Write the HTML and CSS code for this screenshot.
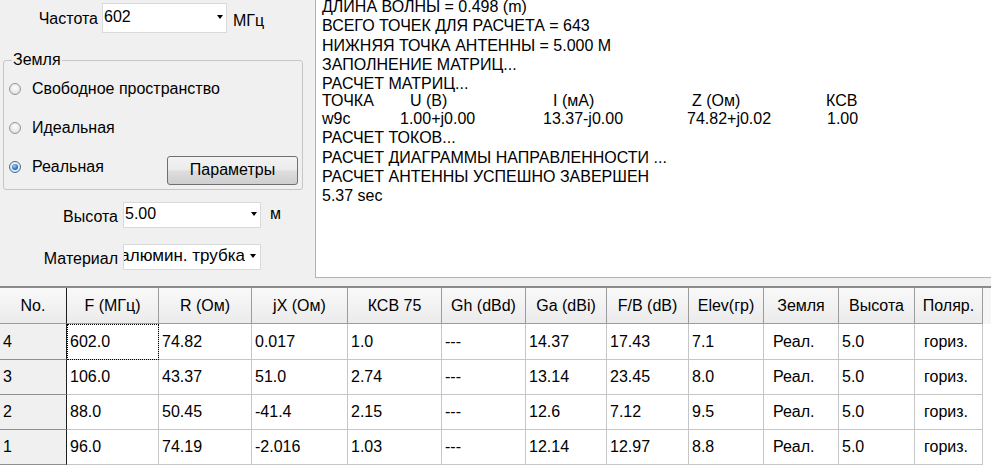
FILE: index.html
```html
<!DOCTYPE html>
<html lang="ru">
<head>
<meta charset="utf-8">
<title>Расчет антенны</title>
<link rel="stylesheet" href="styles.css">
</head>
<body>
<div class="top">
  <div class="left">
    <div class="row-freq">
      <span class="lbl lbl-freq">Частота</span>
      <div class="combo combo-freq"><span class="combo-text">602</span><span class="arrow"></span></div>
      <span class="unit unit-freq">МГц</span>
    </div>
    <fieldset class="ground">
      <legend>Земля</legend>
      <div class="radio-row"><span class="radio"></span><span>Свободное пространство</span></div>
      <div class="radio-row"><span class="radio"></span><span>Идеальная</span></div>
      <div class="radio-row"><span class="radio on"><span class="dot"></span></span><span>Реальная</span><button class="btn">Параметры</button></div>
    </fieldset>
    <div class="row-std row-height">
      <span class="lbl lbl-std">Высота</span>
      <div class="combo combo-std"><span class="combo-text">5.00</span><span class="arrow"></span></div>
      <span class="unit unit-m">м</span>
    </div>
    <div class="row-std row-mat">
      <span class="lbl lbl-std">Материал</span>
      <div class="combo combo-std"><span class="combo-text clip"><span>алюмин. трубка</span></span><span class="arrow arrow-mat"></span></div>
    </div>
  </div>
  <div class="log">
    <div class="log-text">
      <div class="ln">ДЛИНА ВОЛНЫ = 0.498 (m)</div>
      <div class="ln">ВСЕГО ТОЧЕК ДЛЯ РАСЧЕТА = 643</div>
      <div class="ln">НИЖНЯЯ ТОЧКА АНТЕННЫ = 5.000 М</div>
      <div class="ln">ЗАПОЛНЕНИЕ МАТРИЦ...</div>
      <div class="ln">РАСЧЕТ МАТРИЦ...</div>
      <div class="tabrow thead"><span>ТОЧКА</span><span class="c2">U (В)</span><span class="c3">I (мА)</span><span class="c4">Z (Ом)</span><span>КСВ</span></div>
      <div class="tabrow tval"><span>w9c</span><span>1.00+j0.00</span><span>13.37-j0.00</span><span>74.82+j0.02</span><span class="c5">1.00</span></div>
      <div class="ln">РАСЧЕТ ТОКОВ...</div>
      <div class="ln">РАСЧЕТ ДИАГРАММЫ НАПРАВЛЕННОСТИ ...</div>
      <div class="ln">РАСЧЕТ АНТЕННЫ УСПЕШНО ЗАВЕРШЕН</div>
      <div class="ln">5.37 sec</div>
    </div>
  </div>
</div>
<div class="grid-wrap">
  <table class="grid">
    <colgroup>
      <col class="w1"><col class="w2"><col class="w3"><col class="w4"><col class="w5"><col class="w6"><col class="w7"><col class="w8"><col class="w9"><col class="w10"><col class="w11"><col class="w12"><col class="wf">
    </colgroup>
    <thead>
      <tr class="hrow">
        <th class="hno">No.</th><th>F (МГц)</th><th>R (Ом)</th><th>jX (Ом)</th><th>КСВ 75</th><th>Gh (dBd)</th><th>Ga (dBi)</th><th>F/B (dB)</th><th>Elev(гр)</th><th>Земля</th><th>Высота</th><th>Поляр.</th><th class="hfill"></th>
      </tr>
    </thead>
    <tbody>
      <tr class="r1">
        <td class="rh">4</td><td class="focus">602.0</td><td>74.82</td><td>0.017</td><td>1.0</td><td>---</td><td>14.37</td><td>17.43</td><td>7.1</td><td class="ind">Реал.</td><td>5.0</td><td class="ind">гориз.</td><td class="fill"></td>
      </tr>
      <tr>
        <td class="rh">3</td><td>106.0</td><td>43.37</td><td>51.0</td><td>2.74</td><td>---</td><td>13.14</td><td>23.45</td><td>8.0</td><td class="ind">Реал.</td><td>5.0</td><td class="ind">гориз.</td><td class="fill"></td>
      </tr>
      <tr>
        <td class="rh">2</td><td>88.0</td><td>50.45</td><td>-41.4</td><td>2.15</td><td>---</td><td>12.6</td><td>7.12</td><td>9.5</td><td class="ind">Реал.</td><td>5.0</td><td class="ind">гориз.</td><td class="fill"></td>
      </tr>
      <tr>
        <td class="rh">1</td><td>96.0</td><td>74.19</td><td>-2.016</td><td>1.03</td><td>---</td><td>12.14</td><td>12.97</td><td>8.8</td><td class="ind">Реал.</td><td>5.0</td><td class="ind">гориз.</td><td class="fill"></td>
      </tr>
    </tbody>
  </table>
</div>
</body>
</html>
```
FILE: styles.css
```css
* { box-sizing: border-box; }
html, body { margin: 0; padding: 0; }
body {
  width: 991px;
  height: 467px;
  overflow: hidden;
  background: #f0f0f0;
  color: #000;
  font-family: "Liberation Sans", Arial, sans-serif;
  font-size: 16px;
}

/* ---------- top area ---------- */
.top { display: flex; height: 278px; }
.left { width: 315px; flex: none; }

.row-freq {
  display: flex;
  align-items: center;
  height: 30px;
  margin-top: 3px;
}
.lbl { text-align: right; white-space: nowrap; }
.lbl-freq { width: 98px; margin-right: 4px; padding-top: 2px; }
.lbl-std { width: 118px; margin-right: 5px; padding-top: 3px; }

.combo {
  display: flex;
  align-items: center;
  background: #fff;
  border: 1px solid #dadada;
}
.combo-freq { width: 125px; height: 30px; }
.combo-std { width: 138px; height: 26px; }
.combo-text {
  flex: 1;
  min-width: 0;
  padding-left: 1px;
  padding-bottom: 2px;
  overflow: hidden;
  white-space: nowrap;
}
.combo-text.clip {
  display: flex;
  justify-content: flex-end;
  padding-left: 0;
  margin-right: 5px;
  font-size: 17px;
}
.combo-text.clip span { flex: none; }
.arrow {
  flex: none;
  width: 0;
  height: 0;
  border-left: 3.5px solid transparent;
  border-right: 3.5px solid transparent;
  border-top: 4px solid #000;
  margin: 0 3px 2px 4px;
}
.arrow-mat { margin-left: 0; margin-right: 4px; }
.unit { white-space: nowrap; }
.unit-freq { margin-left: 6px; padding-top: 5px; }
.unit-m { margin-left: 9px; padding-bottom: 2px; }

.ground {
  width: 300px;
  margin: 18px 0 0 3px;
  padding: 1px 4px 3px 6px;
  border: 1px solid #c6c6c6;
  border-radius: 3px;
}
.ground legend {
  padding: 0 1px;
  margin-left: 2px;
  line-height: 18px;
}
.radio-row {
  display: flex;
  align-items: center;
  height: 38.7px;
}
.radio {
  flex: none;
  width: 12px;
  height: 12px;
  border-radius: 50%;
  border: 1px solid #969696;
  background: radial-gradient(circle at 50% 40%, #ffffff 0%, #e9e9e9 55%, #cfcfcf 100%);
  margin-left: -1px;
  margin-right: 11px;
  display: flex;
  align-items: center;
  justify-content: center;
}
.radio.on { border-color: #3a6f98; }
.dot {
  width: 6px;
  height: 6px;
  border-radius: 50%;
  background: radial-gradient(circle at 40% 35%, #9fd0f6 0%, #2a78c4 55%, #15508e 100%);
}
.btn {
  margin-left: auto;
  margin-top: 7px;
  width: 131px;
  height: 29px;
  padding: 0;
  border: 1px solid #707070;
  border-radius: 3px;
  background: linear-gradient(#f3f3f3 0%, #ebebeb 48%, #dddddd 52%, #cfcfcf 100%);
  font-family: "Liberation Sans", Arial, sans-serif;
  font-size: 16px;
  color: #000;
}

.row-std { display: flex; align-items: center; }
.row-height { margin-top: 12px; }
.row-mat { margin-top: 16px; }

/* ---------- log ---------- */
.log {
  flex: 1;
  background: #fff;
  border-left: 1px solid #abb4c0;
  border-bottom: 1px solid #abb4c0;
  overflow: hidden;
  padding-left: 6px;
}
.log-text {
  margin-top: -3px;
  line-height: 19.3px;
  white-space: nowrap;
}
.tabrow {
  display: grid;
  grid-template-columns: 78px 143px 144px 139px auto;
}
.thead { line-height: 16px; }
.tval { line-height: 19px; }
.thead .c2, .thead .c3 { padding-left: 10px; }
.thead .c4 { padding-left: 5px; }
.tval .c5 { padding-left: 1px; }

/* ---------- grid ---------- */
.grid-wrap {
  margin-top: 8px;
  border-top: 2px solid #8a8a8a;
  background: #fff;
  height: 181px;
}
.grid {
  border-collapse: separate;
  border-spacing: 0;
  table-layout: fixed;
  width: 991px;
}
.w1 { width: 67px; }
.w2 { width: 92px; }
.w3 { width: 93px; }
.w4 { width: 96px; }
.w5 { width: 94px; }
.w6 { width: 84px; }
.w7 { width: 81px; }
.w8 { width: 82px; }
.w9 { width: 75px; }
.w10 { width: 75px; }
.w11 { width: 76px; }
.w12 { width: 68px; }
.wf { width: 8px; }

.grid tr { height: 35px; }
.grid tr.hrow, .grid tr.r1 { height: 36px; }

.grid th {
  font-weight: normal;
  text-align: center;
  padding: 0;
  white-space: nowrap;
  background: linear-gradient(#f9f9f9, #ebebeb);
  border-right: 1px solid #9c9c9c;
  border-bottom: 1px solid #9c9c9c;
}
.grid th.hno { border-right-color: #1e1e1e; }
.grid th.hfill { background: #f6f6f6; border: none; }

.grid td {
  padding: 0 3px;
  white-space: nowrap;
  text-align: left;
  border-right: 1px solid #c6c6c6;
  border-bottom: 1px solid #c6c6c6;
}
.grid td.rh {
  background: #f0f0f0;
  border-right: 1px solid #1e1e1e;
  border-bottom: 1px solid #8e8e8e;
}
.grid td.ind { padding-left: 9px; }
.grid td.focus { outline: 1px dotted #000; outline-offset: -1px; }
.grid td.fill { border: none; background: #fff; }
```
